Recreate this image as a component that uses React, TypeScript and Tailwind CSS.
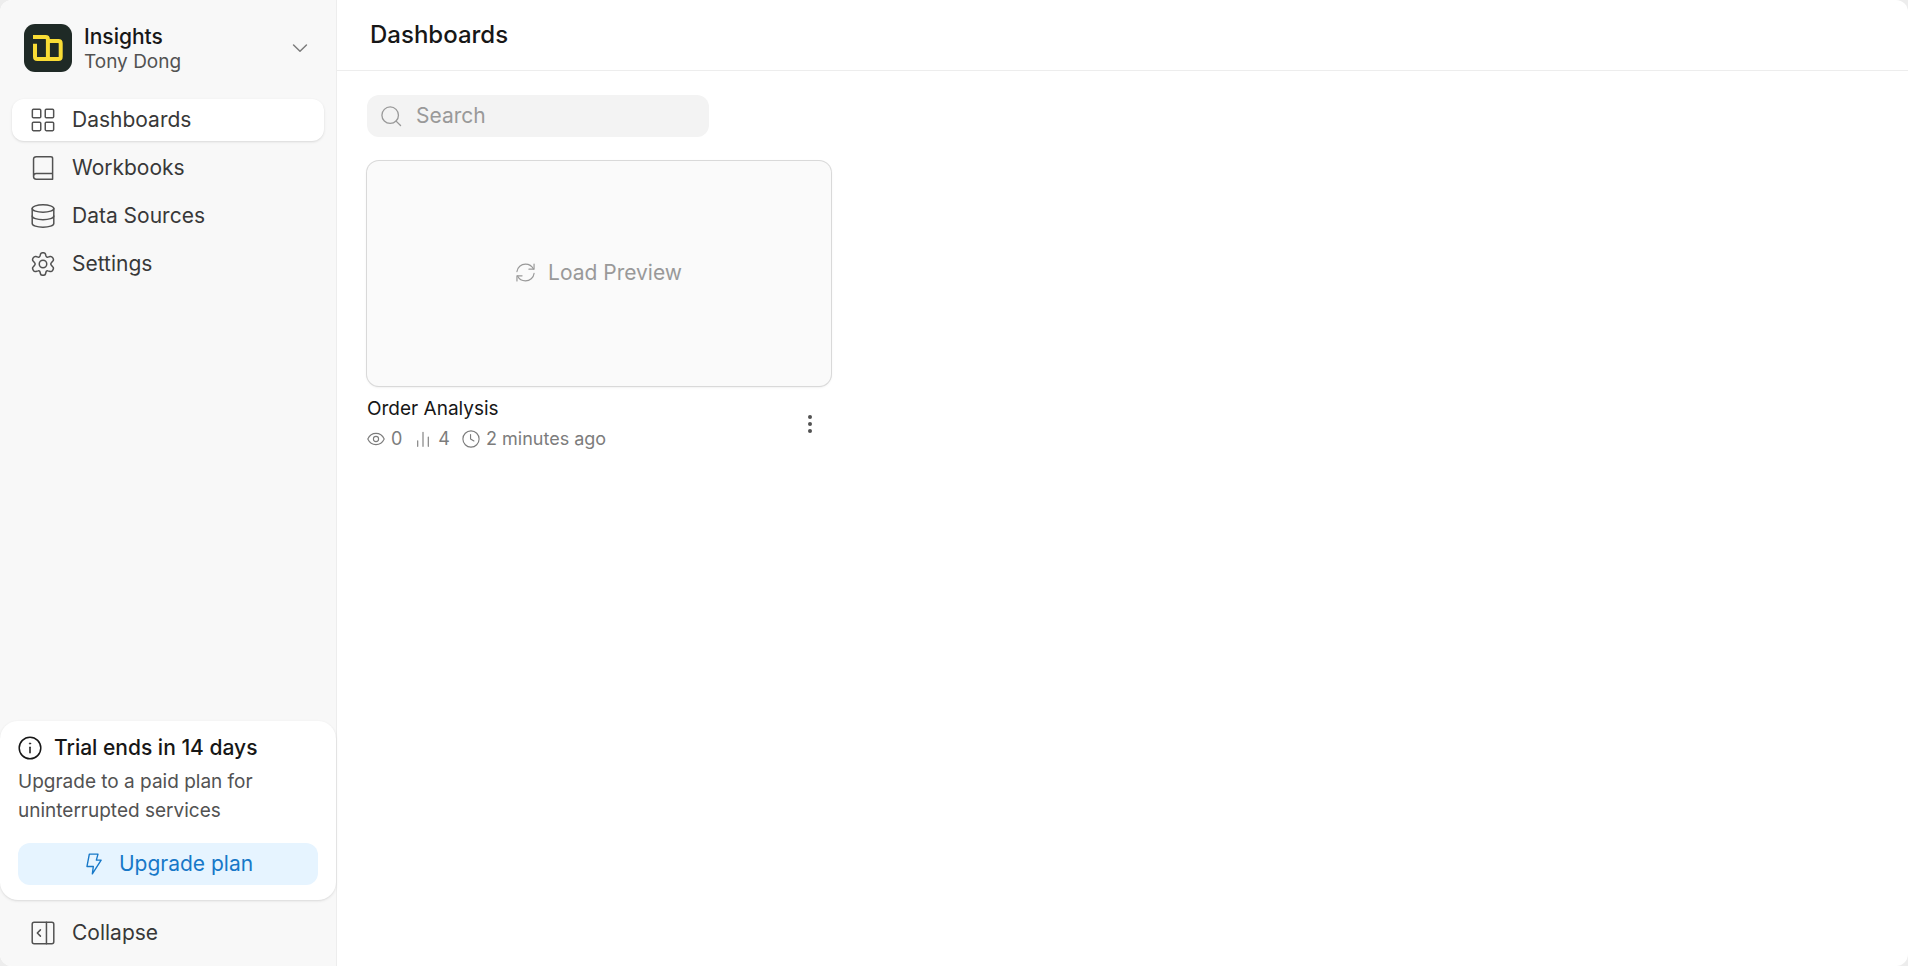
import React from "react";

const svgProps = {
  viewBox: "0 0 16 16",
  fill: "none",
  stroke: "currentColor",
  strokeLinecap: "round" as const,
  strokeLinejoin: "round" as const,
  "aria-hidden": true,
};

type IconProps = { className?: string };

function Logo({ className = "" }: IconProps) {
  return (
    <svg viewBox="0 0 48 48" className={className} aria-hidden="true">
      <rect width="48" height="48" rx="11" fill="#1f2a26" />
      <g fill="none" stroke="#f9dc35" strokeWidth="4" strokeLinejoin="round">
        <path d="M9 13.100H21.500C23 13.100 23.900 14 23.900 15.500V35" />
        <path d="M11 19.700V32.700C11 34.200 11.800 35 13.300 35H34.400C35.900 35 36.700 34.200 36.700 32.700V19.400C36.700 17.900 35.900 17.100 34.400 17.100H24" />
      </g>
    </svg>
  );
}

function GridIcon({ className = "" }: IconProps) {
  return (
    <svg {...svgProps} className={className}>
      <rect x="0.9" y="0.9" width="5.6" height="5.6" rx="0.7" />
      <rect x="9.500" y="0.9" width="5.6" height="5.6" rx="0.7" />
      <rect x="0.9" y="9.500" width="5.6" height="5.6" rx="0.7" />
      <rect x="9.500" y="9.500" width="5.6" height="5.6" rx="0.7" />
    </svg>
  );
}

function BookIcon({ className = "" }: IconProps) {
  return (
    <svg {...svgProps} className={className}>
      <path d="M1.700 13.600V2.200C1.700 1.100 2.400 0.500 3.500 0.500H13.200C13.900 0.500 14.400 0.900 14.400 1.600V15.500H3.500C2.400 15.500 1.700 14.900 1.700 13.700C1.700 12.500 2.400 11.700 3.500 11.700H14.400" />
    </svg>
  );
}

function DatabaseIcon({ className = "" }: IconProps) {
  return (
    <svg {...svgProps} className={className}>
      <ellipse cx="8" cy="3" rx="7.200" ry="2.500" />
      <path d="M0.800 3V13C0.800 14.400 4 15.500 8 15.500S15.200 14.400 15.200 13V3" />
      <path d="M0.800 8C0.800 9.400 4 10.500 8 10.500S15.200 9.400 15.200 8" />
    </svg>
  );
}

function GearIcon({ className = "" }: IconProps) {
  return (
    <svg {...svgProps} className={className}>
      <circle cx="8" cy="8" r="2.500" />
      <path d="M6.300 1.500C6.600 0.100 9.400 0.100 9.700 1.500L10 2.700C10.200 3.300 10.700 3.600 11.300 3.400L12.700 3C14.100 2.600 15.600 5 14.600 6L13.700 7C13.100 7.600 13.100 8.400 13.700 9L14.600 10C15.600 11 14.100 13.400 12.700 13L11.300 12.600C10.700 12.400 10.200 12.700 10 13.300L9.700 14.500C9.400 15.900 6.600 15.900 6.300 14.500L6 13.300C5.800 12.700 5.300 12.400 4.700 12.600L3.300 13C1.900 13.400 0.400 11 1.400 10L2.300 9C2.900 8.400 2.900 7.600 2.300 7L1.400 6C0.400 5 1.900 2.600 3.300 3L4.700 3.400C5.300 3.600 5.800 3.300 6 2.700Z" />
    </svg>
  );
}

function CollapseIcon({ className = "" }: IconProps) {
  return (
    <svg {...svgProps} className={className}>
      <rect x="0.800" y="0.800" width="14.400" height="14.400" rx="1.300" />
      <path d="M10.300 0.800V15.200" />
      <path d="M6.300 5.900L4.200 8L6.300 10.100" />
    </svg>
  );
}

function ChevronIcon({ className = "" }: IconProps) {
  return (
    <svg {...svgProps} className={className}>
      <path d="M3.700 6L8 10.200L12.300 6" />
    </svg>
  );
}

function SearchIcon({ className = "" }: IconProps) {
  return (
    <svg {...svgProps} className={className}>
      <circle cx="7" cy="7" r="6.300" />
      <path d="M11.500 11.500L14.900 14.900" />
    </svg>
  );
}

function RefreshIcon({ className = "" }: IconProps) {
  return (
    <svg {...svgProps} className={className}>
      <path d="M0.800 7.200C1.200 3.700 4.300 0.900 8 0.900C11 0.900 13.500 2.600 14.700 5" />
      <path d="M15.200 0.900V5.200H10.900" />
      <path d="M15.200 8.800C14.800 12.300 11.700 15.100 8 15.100C5 15.100 2.500 13.400 1.300 11" />
      <path d="M0.800 15.100V10.800H5.100" />
    </svg>
  );
}

function EyeIcon({ className = "" }: IconProps) {
  return (
    <svg {...svgProps} className={className}>
      <path d="M0.700 8C2.200 4.800 4.900 3 8 3S13.800 4.800 15.300 8C13.800 11.200 11.100 13 8 13S2.200 11.200 0.700 8Z" />
      <circle cx="8" cy="8" r="2.300" />
    </svg>
  );
}

function BarsIcon({ className = "" }: IconProps) {
  return (
    <svg {...svgProps} className={className}>
      <path d="M3.300 9.500V14.500M8 2V14.500M12.700 6.200V14.500" />
    </svg>
  );
}

function ClockIcon({ className = "" }: IconProps) {
  return (
    <svg {...svgProps} className={className}>
      <circle cx="8" cy="8" r="7.200" />
      <path d="M7.600 4V8L10.600 9.800" />
    </svg>
  );
}

function InfoIcon({ className = "" }: IconProps) {
  return (
    <svg {...svgProps} className={className}>
      <circle cx="8" cy="8" r="7.200" />
      <path d="M8 7.500V11.200" />
      <circle cx="8" cy="5" r="0.500" fill="currentColor" strokeWidth="0.300" />
    </svg>
  );
}

function BoltIcon({ className = "" }: IconProps) {
  return (
    <svg {...svgProps} className={className}>
      <path d="M4.600 0.800H10.900L9.700 5.200H13.200L6.800 15.200L7.500 9.800H2.900Z" />
    </svg>
  );
}

const navItems = [
  { label: "Dashboards", Icon: GridIcon, active: true },
  { label: "Workbooks", Icon: BookIcon, active: false },
  { label: "Data Sources", Icon: DatabaseIcon, active: false },
  { label: "Settings", Icon: GearIcon, active: false },
];

function Sidebar() {
  return (
    <aside className="flex w-[337px] shrink-0 flex-col border-r border-[#ededed] bg-[#f8f8f8]">
      <div className="px-3 pt-3 pb-[15px]">
        <button type="button" className="flex h-[72px] w-full items-center gap-3 px-3 text-left">
          <Logo className="size-12 shrink-0" />
          <span className="flex min-w-0 flex-1 flex-col pt-[2px] leading-[25px]">
            <span className="text-[21px] font-medium text-[#171717]">Insights</span>
            <span className="text-[19px] text-[#525252]">Tony Dong</span>
          </span>
          <ChevronIcon className="size-6 text-[#7c7c7c]" />
        </button>
      </div>
      <nav aria-label="Main" className="flex flex-col gap-[6px] px-3">
        {navItems.map(({ label, Icon, active }) => (
          <a
            key={label}
            href="#"
            aria-current={active ? "page" : undefined}
            className={
              active
                ? "flex h-[42px] items-center gap-[17px] rounded-xl bg-white pl-[19px] text-[21px] text-[#383838] shadow-sm"
                : "flex h-[42px] items-center gap-[17px] rounded-xl pl-[19px] text-[21px] text-[#383838]"
            }
          >
            <Icon className="size-6 text-[#525252]" />
            {label}
          </a>
        ))}
      </nav>
      <section className="mt-auto flex flex-col rounded-[18px] bg-white px-[18px] pt-3 pb-[15px] shadow-sm">
        <h2 className="flex h-[30px] items-center gap-3 text-[21px] font-medium text-[#171717]">
          <InfoIcon className="size-6" />
          Trial ends in 14 days
        </h2>
        <p className="mt-1 text-[19px] leading-[29px] text-[#525252]">
          Upgrade to a paid plan for uninterrupted services
        </p>
        <button
          type="button"
          className="mt-[18px] flex h-[42px] w-full items-center justify-center gap-[14px] rounded-xl bg-[#e6f4ff] text-[21px] text-[#1778c8]"
        >
          <BoltIcon className="size-[22px]" />
          Upgrade plan
        </button>
      </section>
      <div className="p-3">
        <button type="button" className="flex h-[42px] w-full items-center gap-[17px] pl-[19px] text-[21px] text-[#383838]">
          <CollapseIcon className="size-6 text-[#525252]" />
          Collapse
        </button>
      </div>
    </aside>
  );
}

function DashboardCard() {
  return (
    <article className="w-[464px] max-w-full">
      <button
        type="button"
        className="flex h-[225px] w-full items-center justify-center gap-[13px] rounded-xl bg-[#fafafa] pb-[2px] text-[21px] text-[#999999] shadow-sm ring-1 ring-[#d9d9d9]"
      >
        <RefreshIcon className="size-[19px]" />
        Load Preview
      </button>
      <div className="flex items-center justify-between pt-2">
        <div>
          <h2 className="text-[19px] leading-[30px] text-[#171717]">Order Analysis</h2>
          <div className="flex items-center gap-3 text-[18px] leading-[30px] text-[#7c7c7c]">
            <span className="flex items-center gap-[6px]">
              <EyeIcon className="size-[18px]" />0
            </span>
            <span className="flex items-center gap-[6px]">
              <BarsIcon className="size-[18px]" />4
            </span>
            <span className="flex items-center gap-[6px]">
              <ClockIcon className="size-[18px]" />2 minutes ago
            </span>
          </div>
        </div>
        <button type="button" aria-label="More actions" className="flex size-[42px] items-center justify-center text-[#525252]">
          <svg viewBox="0 0 24 24" className="size-6" fill="currentColor" aria-hidden="true">
            <circle cx="12" cy="5" r="2" />
            <circle cx="12" cy="12" r="2" />
            <circle cx="12" cy="19" r="2" />
          </svg>
        </button>
      </div>
    </article>
  );
}

export default function App() {
  return (
    <div className="min-h-screen bg-[#ededed] font-[Inter,sans-serif]">
      <div className="flex min-h-screen overflow-hidden rounded-xl bg-white">
        <Sidebar />
        <main className="min-w-0 flex-1">
          <header className="flex h-[71px] items-center border-b border-[#ededed] px-[33px]">
            <h1 className="text-[24px] font-medium text-[#171717]">Dashboards</h1>
          </header>
          <div className="flex flex-col items-start gap-6 px-[30px] py-6">
            <label className="flex h-[42px] w-[342px] items-center gap-[14px] rounded-xl bg-[#f3f3f3] px-[14px] text-[#999999]">
              <SearchIcon className="size-[21px]" />
              <input
                type="search"
                aria-label="Search"
                placeholder="Search"
                className="min-w-0 flex-1 bg-transparent text-[21px] text-[#383838] outline-none placeholder:text-[#999999]"
              />
            </label>
            <DashboardCard />
          </div>
        </main>
      </div>
    </div>
  );
}
